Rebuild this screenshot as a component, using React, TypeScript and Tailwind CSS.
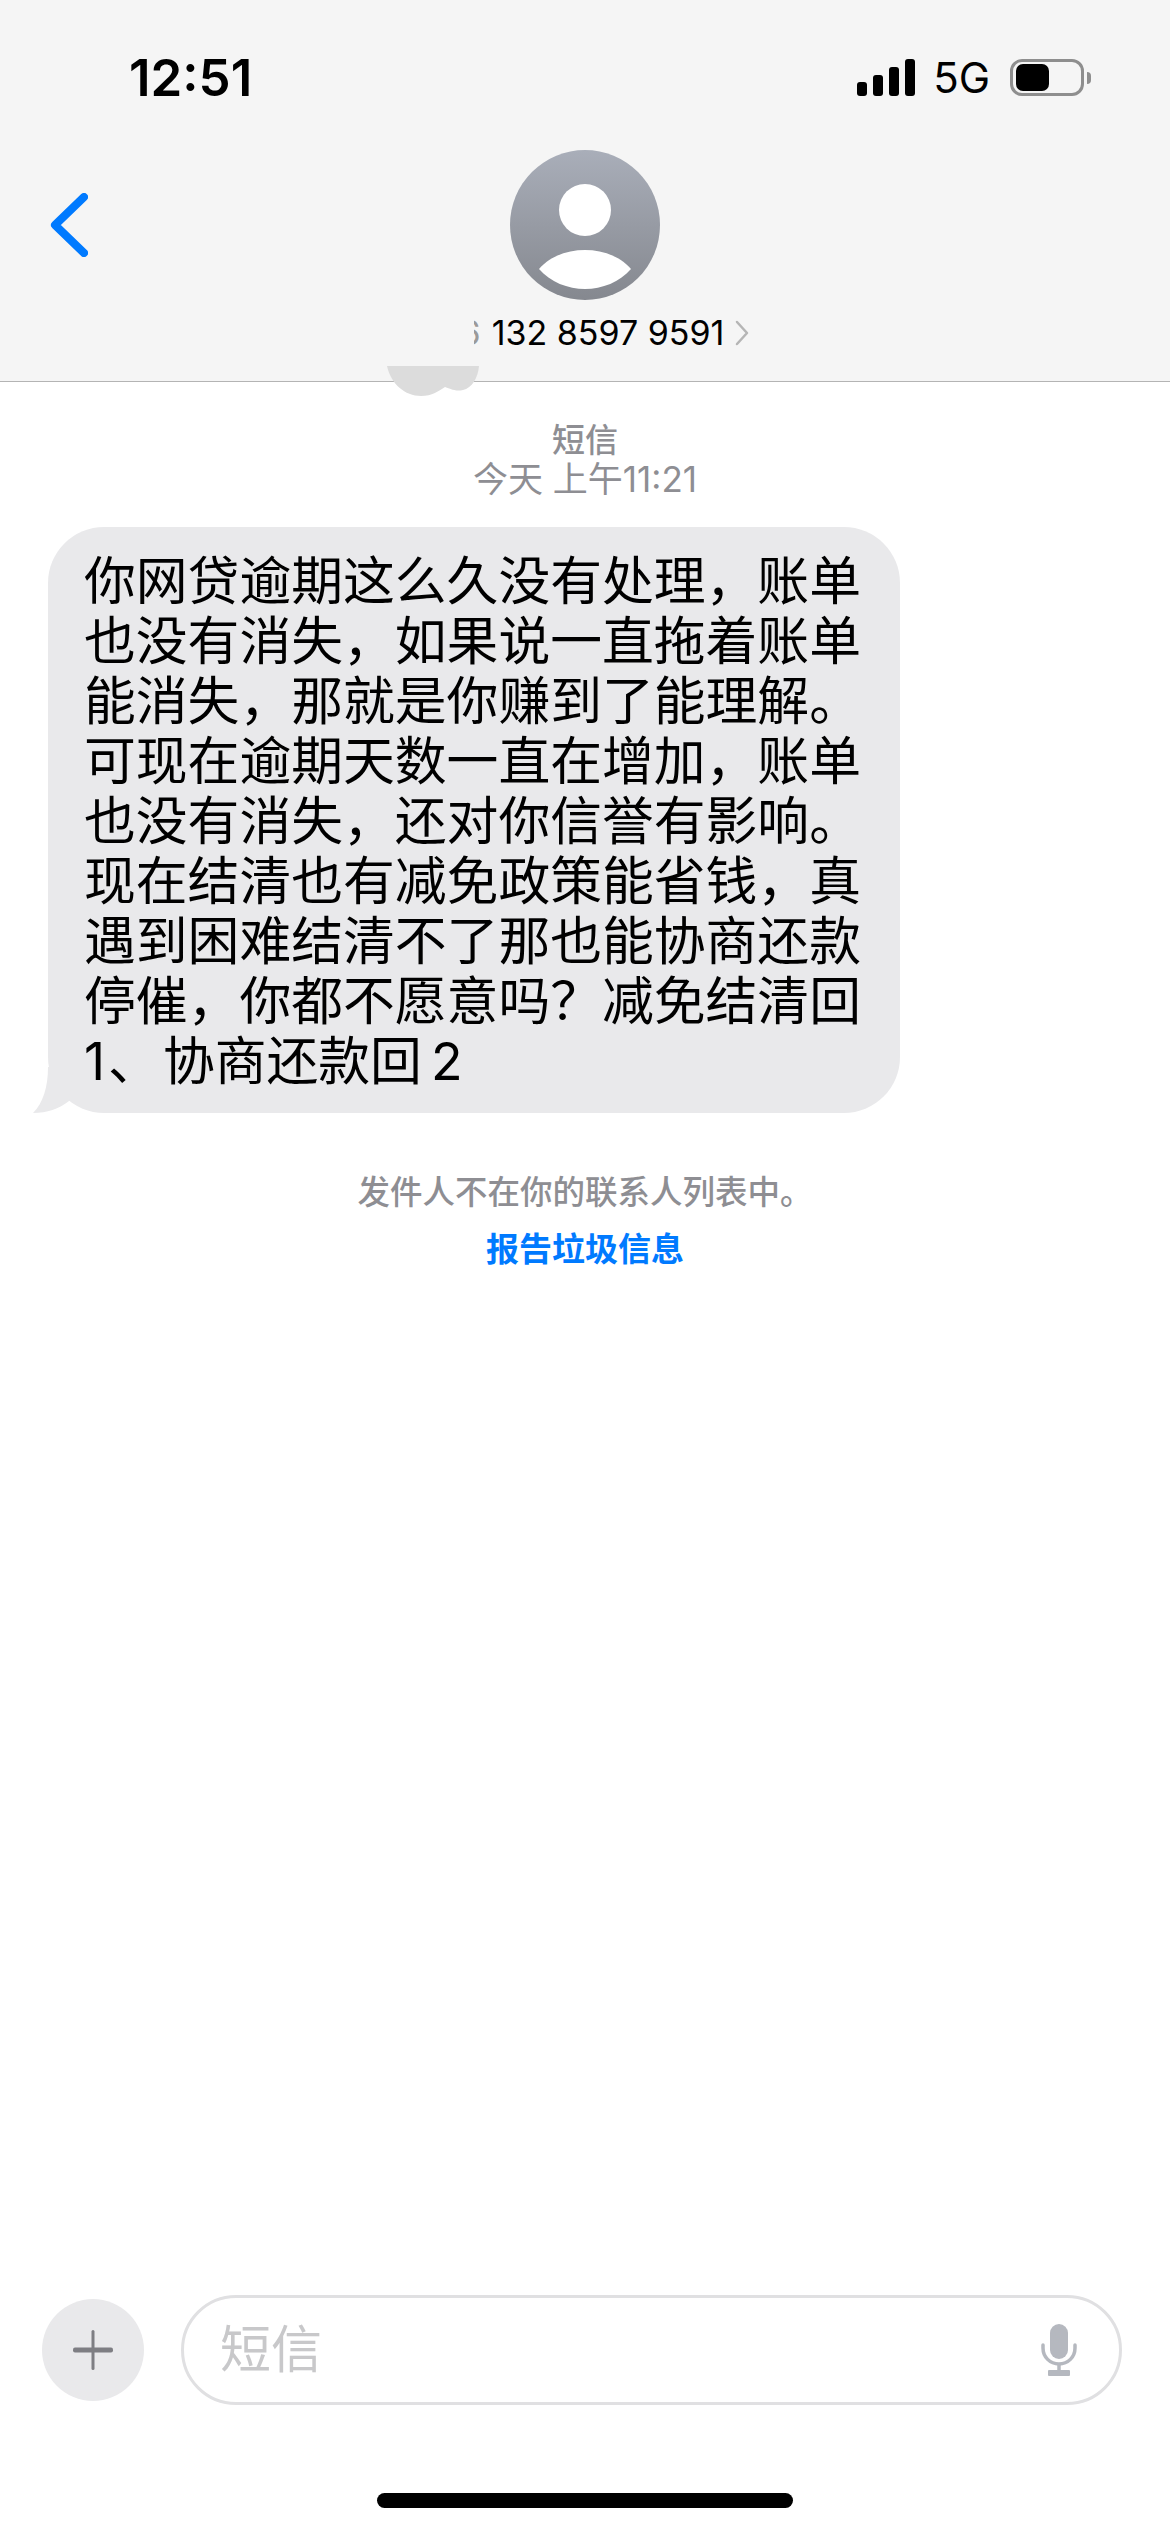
import React from 'react';

const MESSAGE_LINES = [
  '你网贷逾期这么久没有处理，账单',
  '也没有消失，如果说一直拖着账单',
  '能消失，那就是你赚到了能理解。',
  '可现在逾期天数一直在增加，账单',
  '也没有消失，还对你信誉有影响。',
  '现在结清也有减免政策能省钱，真',
  '遇到困难结清不了那也能协商还款',
  '停催，你都不愿意吗？减免结清回',
];

const StatusBar: React.FC = () => (
  <div className="flex h-[150px] items-start justify-between pl-[129px] pr-[79px] pt-[54px]">
    <span className="text-[51px] leading-[48px] font-semibold text-black">12:51</span>
    <div className="flex items-center pt-[5px]">
      {/* signal bars */}
      <div className="flex h-[37px] items-end gap-[6px]">
        <div className="h-[14px] w-[10px] rounded-[3px] bg-black" />
        <div className="h-[21px] w-[10px] rounded-[3px] bg-black" />
        <div className="h-[29px] w-[10px] rounded-[3px] bg-black" />
        <div className="h-[37px] w-[10px] rounded-[3px] bg-black" />
      </div>
      <span className="ml-[18px] text-[42px] leading-[37px] font-normal text-black">5G</span>
      {/* battery */}
      <div className="ml-[20px] flex h-[37px] w-[74px] items-center rounded-[12px] border-[3px] border-[#8e8e8e] pl-[3px]">
        <div className="h-[27px] w-[33px] rounded-[7px] bg-black" />
      </div>
      <div className="ml-[3px] h-[12px] w-[4px] rounded-r-full bg-[#8e8e8e]" />
    </div>
  </div>
);

const Avatar: React.FC = () => (
  <svg width="150" height="150" viewBox="0 0 150 150">
    <defs>
      <linearGradient id="avatarFill" x1="0" y1="0" x2="0" y2="1">
        <stop offset="0" stopColor="#a9aeb9" />
        <stop offset="1" stopColor="#85888f" />
      </linearGradient>
    </defs>
    <circle cx="75" cy="75" r="75" fill="url(#avatarFill)" />
    <circle cx="75" cy="60" r="26" fill="#fff" />
    <path d="M29 119C40 106 58 100 75 100C92 100 110 106 121 119C110 132 92 139 75 139C58 139 40 132 29 119Z" fill="#fff" />
  </svg>
);

const Header: React.FC = () => (
  <header className="h-[382px] border-b border-b-[#b4b4b4] bg-[#f5f5f5]">
    <StatusBar />
    <div className="grid h-[150px] grid-cols-[1fr_150px_1fr]">
      <div className="flex items-center pl-[50px]">
        <svg width="38" height="64" viewBox="0 0 38 64" fill="none">
          <path d="M34 4L5 32L34 60" stroke="#007aff" strokeWidth="8" strokeLinecap="round" strokeLinejoin="round" />
        </svg>
      </div>
      <Avatar />
    </div>
    <div className="mt-[14px] ml-[54px] flex h-[38px] items-center justify-center">
      <span className="mr-[11px] h-[38px] w-[7px] overflow-hidden text-right text-[34px] leading-[38px] text-[#9a9a9a] [direction:rtl]">6</span>
      <span className="text-[34px] leading-[38px] text-black">132 8597 9591</span>
      <svg className="ml-[11px]" width="15" height="26" viewBox="0 0 15 26" fill="none">
        <path d="M2 2L12 13L2 24" stroke="#b5b5b5" strokeWidth="2.5" strokeLinecap="round" strokeLinejoin="round" />
      </svg>
    </div>
  </header>
);

const Bubble: React.FC = () => (
  <div className="relative ml-[48px] w-[852px] rounded-[56px] bg-[#e9e9eb] pb-[22px] pl-[36px] pt-[24px] text-[51.8px] leading-[60px] text-black">
    {MESSAGE_LINES.map((line) => (
      <div key={line} className="whitespace-nowrap">{line}</div>
    ))}
    <div className="whitespace-nowrap">
      <span className="tracking-[3px]">1、</span>协商还款回<span className="ml-[9px]">2</span>
    </div>
    {/* tail */}
    <svg className="absolute bottom-0 left-[-15px]" width="40" height="46" viewBox="0 0 40 46">
      <path d="M15 0C15 20 10 36 0 46C14 46 26 42 36 34L40 0Z" fill="#e9e9eb" />
    </svg>
  </div>
);

const Composer: React.FC = () => (
  <div className="mt-auto flex items-center pl-[42px] pr-[48px]">
    <div className="flex h-[102px] w-[102px] shrink-0 items-center justify-center rounded-full bg-[#e9e9eb]">
      <svg width="40" height="40" viewBox="0 0 40 40">
        <rect x="0" y="17.5" width="40" height="5" rx="2" fill="#7e7e83" />
        <rect x="18.5" y="0" width="3" height="40" rx="1.5" fill="#7e7e83" />
      </svg>
    </div>
    <div className="ml-[37px] flex h-[110px] flex-1 items-center justify-between rounded-[55px] border-[3px] border-[#e0e0e2] pl-[36px] pr-[42px]">
      <span className="text-[51px] leading-[60px] text-[#c8c8ca]">短信</span>
      <svg width="36" height="52" viewBox="0 0 36 52" fill="none">
        <rect x="9" y="0" width="18" height="35" rx="9" fill="#b5b8bf" />
        <path d="M2 21V24C2 33 9 40 18 40C27 40 34 33 34 24V21" stroke="#b5b8bf" strokeWidth="3.5" strokeLinecap="round" />
        <path d="M18 40V47" stroke="#b5b8bf" strokeWidth="3.5" />
        <rect x="7" y="46" width="22" height="6" rx="1" fill="#b5b8bf" />
      </svg>
    </div>
  </div>
);

export default function App() {
  return (
    <div className="relative flex h-[2532px] w-[1170px] flex-col overflow-hidden bg-white font-['Inter','Noto_Sans_CJK_SC',sans-serif]">
      <Header />

      {/* smudge over the header edge */}
      <svg className="absolute left-[387px] top-[366px]" width="92" height="30" viewBox="0 0 92 30">
        <path d="M0 0H92C91 12 85 22 76 24C68 26 62 22 58 21C52 25 45 30 34 30C18 30 4 18 0 0Z" fill="#dcdcdc" />
      </svg>

      <div className="mt-[39px] flex flex-col items-center text-[#8e8e93]">
        <span className="text-[33px] leading-[38px] font-medium">短信</span>
        <span className="text-[35px] leading-[40px]">今天 上午11:21</span>
      </div>

      <div className="mt-[28px]">
        <Bubble />
      </div>

      <div className="mt-[60px] flex flex-col items-center">
        <span className="text-[32.5px] leading-[40px] font-medium text-[#8e8e93]">发件人不在你的联系人列表中。</span>
        <span className="mt-[16px] text-[33px] leading-[40px] font-semibold text-[#007aff]">报告垃圾信息</span>
      </div>

      <Composer />

      <div className="flex h-[127px] justify-center pt-[88px]">
        <div className="h-[15px] w-[416px] rounded-full bg-black" />
      </div>
    </div>
  );
}
